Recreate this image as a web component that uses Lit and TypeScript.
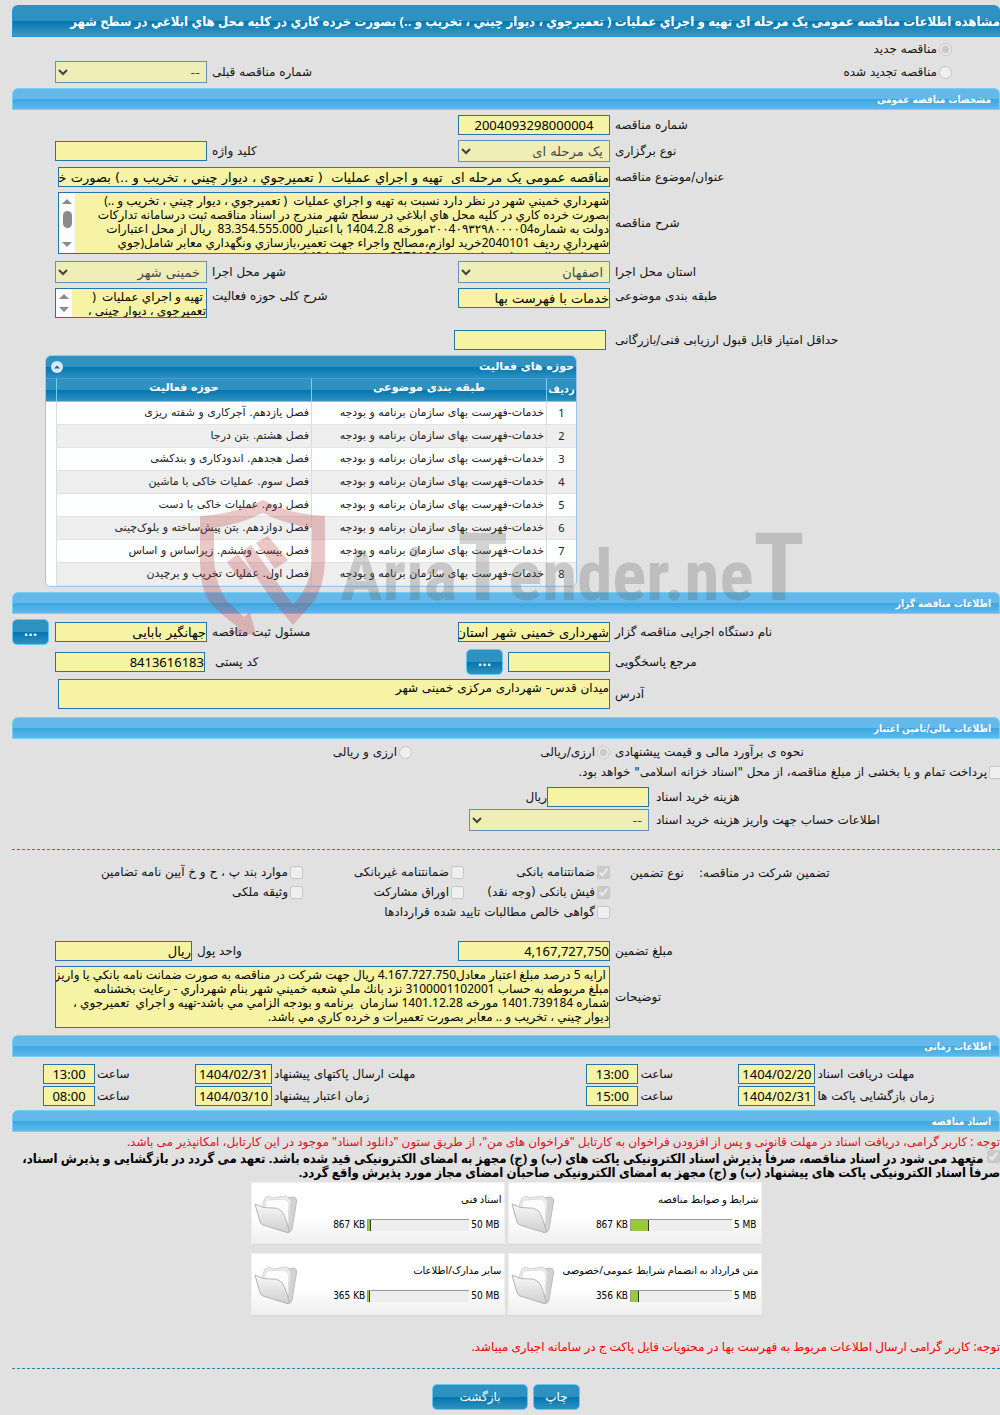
import { LitElement, html, css, svg } from "lit";
import { customElement, property } from "lit/decorators.js";

const shared = css`
  * { box-sizing: border-box; }
  input, select, textarea {
    font-family: "Noto Sans", "DejaVu Sans", sans-serif;
    margin: 0;
  }
  button { font-family: "DejaVu Sans", sans-serif; margin: 0; }
`;

interface Activity { group: string; area: string; }
interface Doc { title: string; used: string; limit: string; percent: number; }

const GROUP = "خدمات-فهرست بهای سازمان برنامه و بودجه";
const ACTIVITIES: Activity[] = [
  "فصل یازدهم. آجرکاری و شفته ریزی",
  "فصل هشتم. بتن درجا",
  "فصل هجدهم. اندودکاری و بندکشی",
  "فصل سوم. عملیات خاکی با ماشین",
  "فصل دوم. عملیات خاکی با دست",
  "فصل دوازدهم. بتن پیش‌ساخته و بلوک‌چینی",
  "فصل بیست وششم. زیراساس و اساس",
  "فصل اول. عملیات تخریب و برچیدن",
].map((area) => ({ group: GROUP, area }));

const DOCS: Doc[] = [
  { title: "شرایط و ضوابط مناقصه", used: "867 KB", limit: "5 MB", percent: 18 },
  { title: "اسناد فنی", used: "867 KB", limit: "50 MB", percent: 3 },
  { title: "متن قرارداد به انضمام شرایط عمومی/خصوصی", used: "356 KB", limit: "5 MB", percent: 8 },
  { title: "سایر مدارک/اطلاعات", used: "365 KB", limit: "50 MB", percent: 2 },
];

const TITLE =
  "مناقصه عمومی یک مرحله ای  تهیه و اجراي عملیات  ( تعميرجوي ، ديوار چيني ، تخريب و ..) بصورت خرده كاري در كليه محل هاي ابلاغي در سطح شهر";

const DESCRIPTION = `شهرداري خميني شهر در نظر دارد نسبت به تهيه و اجراي عمليات  ( تعميرجوي ، ديوار چيني ، تخريب و ..)
بصورت خرده كاري در كليه محل هاي ابلاغي در سطح شهر مندرج در اسناد مناقصه ثبت درسامانه تداركات
دولت به شماره۲۰۰4۰۹۳۲۹۸۰۰۰۰04مورخه 1404.2.8 با اعتبار 83.354.555.000  ريال از محل اعتبارات
شهرداري رديف 2040101خريد لوازم،مصالح واجراء جهت تعمير،بازسازي ونگهداري معابر شامل(جوي
وجدول،آسفالت و پياده رو) و رديف 2079100 بودجه سال 1404
اقدام نمايد.`;

const SCOPE = ` تهيه و اجراي عمليات  (
تعميرجوي ، ديوار چيني ،
تخريب و ..) بصورت خرده كاري`;

const NOTES = ` ارايه 5 درصد مبلغ اعتبار معادل4.167.727.750 ريال جهت شركت در مناقصه به صورت ضمانت نامه بانكي يا واريز
مبلغ مربوطه به حساب 3100001102001 نزد بانك ملي شعبه خميني شهر بنام شهرداري - رعايت بخشنامه
شماره 1401.739184 مورخه 1401.12.28 سازمان  برنامه و بودجه الزامي مي باشد-تهيه و اجراي  تعميرجوي ،
ديوار چيني ، تخريب و .. معابر بصورت تعميرات و خرده كاري مي باشد.`;

@customElement("section-bar")
class SectionBar extends LitElement {
  @property() heading = "";
  static styles = css`
    :host { display: block; font-family: "DejaVu Sans Condensed", "DejaVu Sans", sans-serif; }
    h2 {
      box-sizing: border-box;
      margin: 0;
      height: 22px;
      padding-right: 8px;
      font-size: 10px;
      line-height: 21px;
      font-weight: bold;
      color: #fff;
      border: 1px solid #74d1f6;
      border-radius: 6px 6px 0 0;
      background: linear-gradient(#64b9ea 0 50%, #3aa7e2 50%, #5fb9ea 100%);
    }
  `;
  render() { return html`<h2>${this.heading}</h2>`; }
}

@customElement("activity-grid")
class ActivityGrid extends LitElement {
  static styles = [shared, css`
    :host { display: block; }
    .frame {
      border: 1px solid #9cc6e4;
      border-radius: 6px;
      overflow: hidden;
      background: #fdfefe;
    }
    .caption {
      display: flex;
      justify-content: space-between;
      align-items: center;
      height: 22px;
      padding: 0 2px 0 5px;
      color: #fff;
      font-size: 11px;
      font-weight: bold;
      background: linear-gradient(#2f91c0 0 50%, #0276b0 50%, #2f90bf 100%);
    }
    .fold { border: 0; padding: 0; width: 12px; height: 12px; border-radius: 50%; background: #dbe9f5; display: block; }
    .fold svg { display: block; width: 12px; height: 12px; }
    table { width: 100%; border-collapse: separate; border-spacing: 0; table-layout: fixed; }
    th {
      height: 24px; padding: 0 0 4px; color: #fff; font-size: 11px; line-height: 16px; font-weight: bold;
      background: linear-gradient(#2f91c0 0 50%, #0276b0 50%, #2f90bf 100%);
      border-left: 1px solid #74d1f6;
      border-top: 1px solid #4297e0;
      border-bottom: 1px solid #74d1f6;
      white-space: nowrap;
    }
    th.tight { font-family: "DejaVu Sans Condensed", "DejaVu Sans", sans-serif; padding: 0; }
    td {
      height: 23px; padding: 0 2px; font-size: 11px; color: #222;
      border-left: 1px solid #dcdcdc; border-bottom: 1px solid #e2e2e2;
      white-space: nowrap; line-height: 14px;
    }
    td.num { text-align: center; font-family: "Noto Sans", sans-serif; }
    th:last-child, td:last-child { border-left: 0; }
    tr:nth-child(even) td { background: #eeeeee; }
    tr td:last-child, tr:nth-child(even) td:last-child { background: #fdfefe; border-bottom: 0; }
    .c1 { width: 30px; } .c2 { width: 235px; } .c4 { width: 10px; }
  `];
  render() {
    return html`<div class="frame">
      <div class="caption"><span>حوزه های فعالیت</span>
        <button class="fold" aria-label="بستن"><svg viewBox="0 0 12 12">${svg`<path d="M3 7.5 6 4.5 9 7.5z" fill="#0a6ba3"/>`}</svg></button>
      </div>
      <table>
        <colgroup><col class="c1"><col class="c2"><col><col class="c4"></colgroup>
        <thead><tr><th class="tight">ردیف</th><th>طبقه بندی موضوعی</th><th>حوزه فعالیت</th><th></th></tr></thead>
        <tbody>${ACTIVITIES.map((a, i) => html`<tr>
          <td class="num">${i + 1}</td><td>${a.group}</td><td>${a.area}</td><td></td></tr>`)}</tbody>
      </table>
    </div>`;
  }
}

@customElement("doc-card")
class DocCard extends LitElement {
  @property({ attribute: false }) doc!: Doc;
  static styles = [shared, css`
    :host {
      display: flex; box-sizing: border-box; height: 63px;
      background: linear-gradient(#fff 55%, #eeeeee);
      border: 1px solid #f0f0f0; border-bottom-color: #d8d8d8;
    }
    .body { flex: 1; display: flex; flex-direction: column; justify-content: space-between; padding: 9px 2px 13px 0; }
    .name { font-family: "Noto Sans", "DejaVu Sans", sans-serif; font-size: 10px; line-height: 14px; color: #000; white-space: nowrap; }
    .usage { font-family: "DejaVu Sans Condensed", sans-serif; direction: ltr; display: flex; justify-content: flex-end; align-items: center; gap: 2px; padding-right: 2px; font-size: 10px; line-height: 12px; color: #000; }
    .track { width: 102px; height: 12px; background: #eeeeee; border-top: 1px solid #999; border-left: 1px solid #999; }
    .fill { height: 100%; background: #99cc33; border-right: 1px solid #333; min-width: 2px; }
    svg { width: 44px; height: 44px; margin: 9px 0 0 2px; flex: none; }
  `];
  render() {
    const d = this.doc;
    return html`<div class="body">
        <div class="name">${d.title}</div>
        <div class="usage"><span>${d.used}</span><div class="track"><div class="fill" style="width:${d.percent}%"></div></div><span>${d.limit}</span></div>
      </div>
      <svg viewBox="0 0 44 44">${svg`
        <defs>
          <linearGradient id="f" x1="0" y1="0" x2="0" y2="1"><stop offset="0" stop-color="#f8f8f8"/><stop offset="1" stop-color="#cfcfcf"/></linearGradient>
        </defs>
        <path d="M33 6 L39 5 Q43 5 42.500 10 L38 37 Q37 41 34 40z" fill="#d2d2d2" stroke="#bdbdbd"/>
        <path d="M8 14 L11 6 L15 4 L18 6 L32 4 L37 9 L35 32z" fill="#ececec" stroke="#d2d2d2"/>
        <path d="M11 12 L13 8 L31 7 L35 11 L34 32 L12 24z" fill="#fdfdfd" stroke="#dfdfdf"/>
        <path d="M1 12 Q9 17 18 16 Q27 15 31 25 Q33 31 35 38 Q36 41 33 40.500 L9 33 Q6 32 5.500 28z" fill="url(#f)" stroke="#b4b4b4"/>
      `}</svg>`;
  }
}

@customElement("water-mark")
class WaterMark extends LitElement {
  static styles = css`
    :host { display: flex; direction: ltr; align-items: flex-start; gap: 14px; pointer-events: none; }
    .shield { width: 126px; height: 136px; flex: none; }
    .brand {
      padding-top: 9px;
      font-family: "Liberation Sans Narrow", "Roboto Condensed", Roboto, sans-serif;
      font-weight: bold; font-size: 71px; line-height: 134px; color: rgba(95, 95, 95, 0.27);
      white-space: nowrap;
    }
    .tall { font-size: 94px; line-height: 1px; }
  `;
  render() {
    return html`<svg class="shield" viewBox="0 0 126 136">${svg`
      <g fill="rgb(190,50,50)" fill-opacity=".27">
        <path d="M0 16 Q36 14 63 0 Q88 14 125 16 L125 62 Q124 84 115 100 L93 125 L73 101 L56 77 L68 69 L93 105 Q111 85 112 60 L112 28 Q84 24 63 13 Q40 24 14 28 L14 60 Q15 82 26 100 L44 117 L50 112 L56 135 L33 133 L38 127 Q20 114 8 100 Q0 85 0 62z"/>
        <path d="M27 62 38 54 52 72 40 80z"/>
        <path d="M41 52 51 45 68 69 56 77z"/>
        <path d="M56 43 68 36 88 60 75 69z"/>
      </g>`}</svg><span class="brand">Aria<span class="tall">T</span>ender.ne<span class="tall">T</span></span>`;
  }
}

@customElement("app-root")
class AppRoot extends LitElement {
  static styles = [shared, css`
    :host {
      display: block; position: relative; direction: rtl; overflow: hidden;
      min-height: 100vh; background: #e1e1e1; color: #111;
      font-family: "DejaVu Sans", sans-serif;
      font-size: 12px; line-height: 16px;
    }
    main { padding: 5px 0 0 12px; }
    h1 {
      margin: 0; height: 32px; line-height: 30px; font-weight: bold; color: #fff;
      font-family: "Noto Sans", "DejaVu Sans Condensed", sans-serif; font-size: 13px;
      white-space: nowrap; overflow: hidden;
      border: 1px solid #2a90dc; border-right: 0; border-radius: 6px 6px 0 0;
      background: linear-gradient(#2f91c0 0 50%, #0276b0 50%, #3f9ac5 100%);
    }
    .opt { display: flex; align-items: center; gap: 2px; white-space: nowrap; }
    .opt input { width: 13px; height: 13px; flex: none; }
    .kind { display: grid; grid-template-columns: minmax(0, 1fr) auto 152px 43px; align-items: center; padding-bottom: 5px; }
    .kind.first { padding: 0; min-height: 24px; }
    .kind .opt { padding-right: 48px; }

    .panel { display: flex; flex-direction: column; gap: 5px; padding: 5px 0; }
    .row { display: grid; grid-template-columns: minmax(0, 1fr) 152px 251px 152px 43px; align-items: center; }
    .row.unit { grid-template-columns: minmax(0, 1fr) 152px 266px 137px 43px; }
    .row > label, .lab { text-align: left; padding-left: 5px; white-space: nowrap; }
    .row.top { align-items: start; }
    .wide, .full { grid-column: 2 / 5; }
    .spaced { margin-top: 2px; }
    .far { margin-top: 7px; }
    .field {
      height: 20px; width: 100%; padding: 0; font-size: 13px; line-height: 18px; color: #000;
      background: #f6f4a4; border: 1px solid #2474ab; border-radius: 0; outline: 0;
    }
    .fa { font-family: "DejaVu Sans", sans-serif; }
    .wide { width: calc(100% - 3px); }
    .inset { margin-right: 4px; }
    .mid { text-align: center; }
    select.field { height: 22px; padding: 0 2px; }
    .area { display: block; resize: none; padding: 1px 0; font-size: 12px; line-height: 14px; overflow: hidden; white-space: pre; }
    .h62 { height: 62px; } .h30 { height: 30px; }
    .scroll { display: flex; border: 1px solid #2474ab; background: #f6f4a4; }
    .scroll .area { flex: 1; min-width: 0; height: auto; border: 0; }
    .rail { width: 16px; display: flex; flex-direction: column; align-items: center; justify-content: space-between; padding: 6px 0; background: #fcfcfc; }
    .h30 .rail { padding: 5px 0; }
    .rail svg { width: 10px; height: 5px; display: block; }
    .thumb { width: 9px; height: 17px; border-radius: 5px; background: #8b8b8b; margin-bottom: 7px; }

    .btn {
      height: 26px; border: 1px solid #62c8f2; border-radius: 5px; color: #fff; font-size: 12px; padding: 0;
      background: linear-gradient(#2f91c0 0 50%, #0276b0 50%, #3190bf 100%);
    }
    .dots { width: 37px; font-weight: bold; }
    .end { justify-self: end; }
    .desk { grid-column: 2 / 4; display: flex; align-items: center; gap: 5px; }
    .desk .field { width: 102px; }
    .desk label { margin-right: auto; padding-left: 8px; }
    .zip { width: 150px; justify-self: end; }
    .people { gap: 4px; padding: 5px 0 8px; }

    .money { display: grid; grid-template-columns: minmax(0, 1fr) 180px 457px; align-items: center; }
    .money > label { text-align: left; padding-left: 7px; }
    .money > div { display: flex; align-items: center; }
    .cost { width: 102px; }
    .finance { gap: 2px; padding: 5px 0 0; }
    .offers { grid-column: 2 / 6; display: grid; grid-template-columns: 198px 1fr; }
    .over { margin: 2px -2px 5px 0; }
    hr { border: 0; border-top: 1px dashed #2f82ab; margin: 0; }
    .rule { margin-top: 18px; }
    .bonds { display: grid; grid-template-columns: minmax(0, 1fr) 598px; padding-top: 12px; }
    .bonds .lab { display: flex; justify-content: flex-end; gap: 15px; padding-left: 20px; line-height: 22px; }
    .checks { display: grid; grid-template-columns: 146px 161px 1fr; grid-auto-rows: 20px; align-items: center; }
    .checks .last { grid-column: 1 / 3; }
    .bail { padding: 19px 0 7px; }

    .dates { display: grid; grid-template-columns: 37fr 77px 100px 52px 63fr 77px 100px 52px 31px; row-gap: 2px; align-items: center; padding: 7px 0 4px; }
    .dates label { text-align: left; padding-left: 2px; white-space: nowrap; }
    .notice { padding: 2px 0 0; }
    .warn { font-family: "Noto Sans", "DejaVu Sans", sans-serif; margin: 0; color: #e0101c; white-space: nowrap; }
    .pledge {
      display: block; font-family: "Noto Sans", "DejaVu Sans Condensed", sans-serif; font-weight: bold; color: #000;
      font-size: 13px; line-height: 14px; margin-bottom: 3px;
    }
    .pledge input { width: 13px; height: 13px; }
    .cards { display: grid; grid-template-columns: 254px 254px; gap: 8px 3px; justify-content: center; }
    .last-note { color: #ff0000; margin: 23px 0 13px; }
    .actions { display: flex; justify-content: center; gap: 5px; padding: 15px 0 4px; }
    .print { width: 47px; } .back { width: 96px; }
    activity-grid { align-self: flex-end; width: 532px; max-width: 100%; margin-left: 33px; }
    water-mark { position: absolute; left: 200px; top: 500px; }
  `];

  private input(id: string, value = "", cls = "") {
    return html`<input class="field ${cls}" id=${id} readonly .value=${value}>`;
  }
  private select(id: string, value: string) {
    return html`<select class="field fa" id=${id} disabled><option>${value}</option></select>`;
  }
  private check(label: string, checked = false, cls = "") {
    return html`<label class="opt ${cls}"><input type="checkbox" disabled .checked=${checked}><span>${label}</span></label>`;
  }
  private radio(name: string, label: string, checked = false) {
    return html`<label class="opt"><input type="radio" name=${name} disabled .checked=${checked}><span>${label}</span></label>`;
  }
  private scrolling(id: string, value: string, cls: string, thumb: boolean) {
    return html`<div class="scroll ${cls}">
      <textarea class="field area" id=${id} readonly .value=${value}></textarea>
      <div class="rail">
        <svg viewBox="0 0 10 5">${svg`<path d="M0 5 5 0 10 5z" fill="#8b8b8b"/>`}</svg>
        ${thumb ? html`<div class="thumb"></div>` : ""}
        <svg viewBox="0 0 10 5">${svg`<path d="M0 0 5 5 10 0z" fill="#8b8b8b"/>`}</svg>
      </div></div>`;
  }
  private moment(id: string, label: string, date: string, time: string) {
    return html`<label for="${id}-d">${label}</label>${this.input(`${id}-d`, date, "mid")}
      <label for="${id}-t">ساعت</label>${this.input(`${id}-t`, time, "mid")}`;
  }

  render() {
    return html`<main>
      <h1>مشاهده اطلاعات مناقصه عمومی یک مرحله ای تهیه و اجراي عملیات ( تعميرجوي ، ديوار چيني ، تخريب و ..) بصورت خرده كاري در كليه محل هاي ابلاغي در سطح شهر</h1>

      <div class="kind first">${this.radio("kind", "مناقصه جدید", true)}</div>
      <div class="kind">${this.radio("kind", "مناقصه تجدید شده")}
        <label class="lab" for="prev">شماره مناقصه قبلی</label>${this.select("prev", "--")}</div>

      <section-bar heading="مشخصات مناقصه عمومی"></section-bar>
      <section class="panel">
        <div class="row"><label for="no">شماره مناقصه</label>${this.input("no", "2004093298000004", "mid")}</div>
        <div class="row"><label for="type">نوع برگزاری</label>${this.select("type", "یک مرحله ای")}
          <label for="key">کلید واژه</label>${this.input("key")}</div>
        <div class="row"><label for="title">عنوان/موضوع مناقصه</label>${this.input("title", TITLE, "wide fa")}</div>
        <div class="row"><label for="desc">شرح مناقصه</label>${this.scrolling("desc", DESCRIPTION, "wide h62", true)}</div>
        <div class="row spaced"><label for="prov">استان محل اجرا</label>${this.select("prov", "اصفهان")}
          <label for="city">شهر محل اجرا</label>${this.select("city", "خمینی شهر")}</div>
        <div class="row top"><label for="cat">طبقه بندی موضوعی</label>${this.input("cat", "خدمات با فهرست بها", "fa")}
          <label for="scope">شرح کلی حوزه فعالیت</label>${this.scrolling("scope", SCOPE, "h30", false)}</div>
        <div class="row far"><label for="score">حداقل امتیاز قابل قبول ارزیابی فنی/بازرگانی</label>${this.input("score", "", "inset")}</div>
        <activity-grid></activity-grid>
      </section>

      <section-bar heading="اطلاعات مناقصه گزار"></section-bar>
      <section class="panel people">
        <div class="row"><label for="org">نام دستگاه اجرایی مناقصه گزار</label>${this.input("org", "شهرداری خمینی شهر استان اصفهان", "fa")}
          <label for="owner">مسئول ثبت مناقصه</label>${this.input("owner", "جهانگیر بابایی", "fa")}
          <button class="btn dots end">...</button></div>
        <div class="row"><label for="desk">مرجع پاسخگویی</label>
          <div class="desk">${this.input("desk")}<button class="btn dots">...</button><label for="zip">کد پستی</label></div>
          ${this.input("zip", "8413616183", "zip")}</div>
        <div class="row"><label for="addr">آدرس</label>
          <textarea class="field wide area h30 fa" id="addr" readonly .value=${"میدان قدس- شهرداری مرکزی خمینی شهر"}></textarea></div>
      </section>

      <section-bar heading="اطلاعات مالی/تامین اعتبار"></section-bar>
      <section class="panel finance">
        <div class="row"><span class="lab">نحوه ی برآورد مالی و قیمت پیشنهادی</span>
          <div class="offers">${this.radio("cur", "ارزی/ریالی", true)}${this.radio("cur", "ارزی و ریالی")}</div></div>
        <div class="over">${this.check('پرداخت تمام و یا بخشی از مبلغ مناقصه، از محل "اسناد خزانه اسلامی" خواهد بود.')}</div>
        <div class="money"><label for="cost">هزینه خرید اسناد</label><div>${this.input("cost", "", "cost")}<span>ریال</span></div></div>
        <div class="money"><label for="acct">اطلاعات حساب جهت واریز هزینه خرید اسناد</label>${this.select("acct", "--")}</div>
      </section>
      <hr class="rule">
      <section class="bonds">
        <div class="lab"><span>تضمین شرکت در مناقصه:</span><span>نوع تضمین</span></div>
        <div class="checks">
          ${this.check("ضمانتنامه بانکی", true)}${this.check("ضمانتنامه غیربانکی")}${this.check("موارد بند پ ، ح و خ آیین نامه تضامین")}
          ${this.check("فیش بانکی (وجه نقد)", true)}${this.check("اوراق مشارکت")}${this.check("وثیقه ملکی")}
          ${this.check("گواهی خالص مطالبات تایید شده قراردادها", false, "last")}
        </div>
      </section>
      <section class="panel bail">
        <div class="row unit"><label for="bail">مبلغ تضمین</label>${this.input("bail", "4,167,727,750")}
          <label for="unit">واحد پول</label>${this.input("unit", "ریال", "fa")}</div>
        <div class="row"><label for="notes">توضیحات</label>
          <textarea class="field full area h62" id="notes" readonly .value=${NOTES}></textarea></div>
      </section>

      <section-bar heading="اطلاعات زمانی"></section-bar>
      <section class="dates">
        ${this.moment("get", "مهلت دریافت اسناد", "1404/02/20", "13:00")}
        ${this.moment("send", "مهلت ارسال پاکتهای پیشنهاد", "1404/02/31", "13:00")}<span></span>
        ${this.moment("open", "زمان بازگشایی پاکت ها", "1404/02/31", "15:00")}
        ${this.moment("valid", "زمان اعتبار پیشنهاد", "1404/03/10", "08:00")}<span></span>
      </section>

      <section-bar heading="اسناد مناقصه"></section-bar>
      <section class="notice">
        <p class="warn">توجه : کاربر گرامی، دریافت اسناد در مهلت قانونی و پس از افزودن فراخوان به کارتابل "فراخوان های من"، از طریق ستون "دانلود اسناد" موجود در این کارتابل، امکانپذیر می باشد.</p>
        <label class="pledge"><input type="checkbox" disabled .checked=${true}>
          متعهد می شود در اسناد مناقصه، صرفاً پذیرش اسناد الکترونیکی پاکت های (ب) و (ج) مجهز به امضای الکترونیکی قید شده باشد. تعهد می گردد در بازگشایی و پذیرش اسناد، صرفاً اسناد الکترونیکی پاکت های پیشنهاد (ب) و (ج) مجهز به امضای الکترونیکی صاحبان امضای مجاز مورد پذیرش واقع گردد.</label>
        <div class="cards">${DOCS.map((doc) => html`<doc-card .doc=${doc}></doc-card>`)}</div>
        <p class="warn last-note">توجه: کاربر گرامی ارسال اطلاعات مربوط به فهرست بها در محتویات فایل پاکت ج در سامانه اجباری میباشد.</p>
      </section>
      <hr>
      <div class="actions"><button class="btn print">چاپ</button><button class="btn back">بازگشت</button></div>
      <water-mark aria-hidden="true"></water-mark>
    </main>`;
  }
}
